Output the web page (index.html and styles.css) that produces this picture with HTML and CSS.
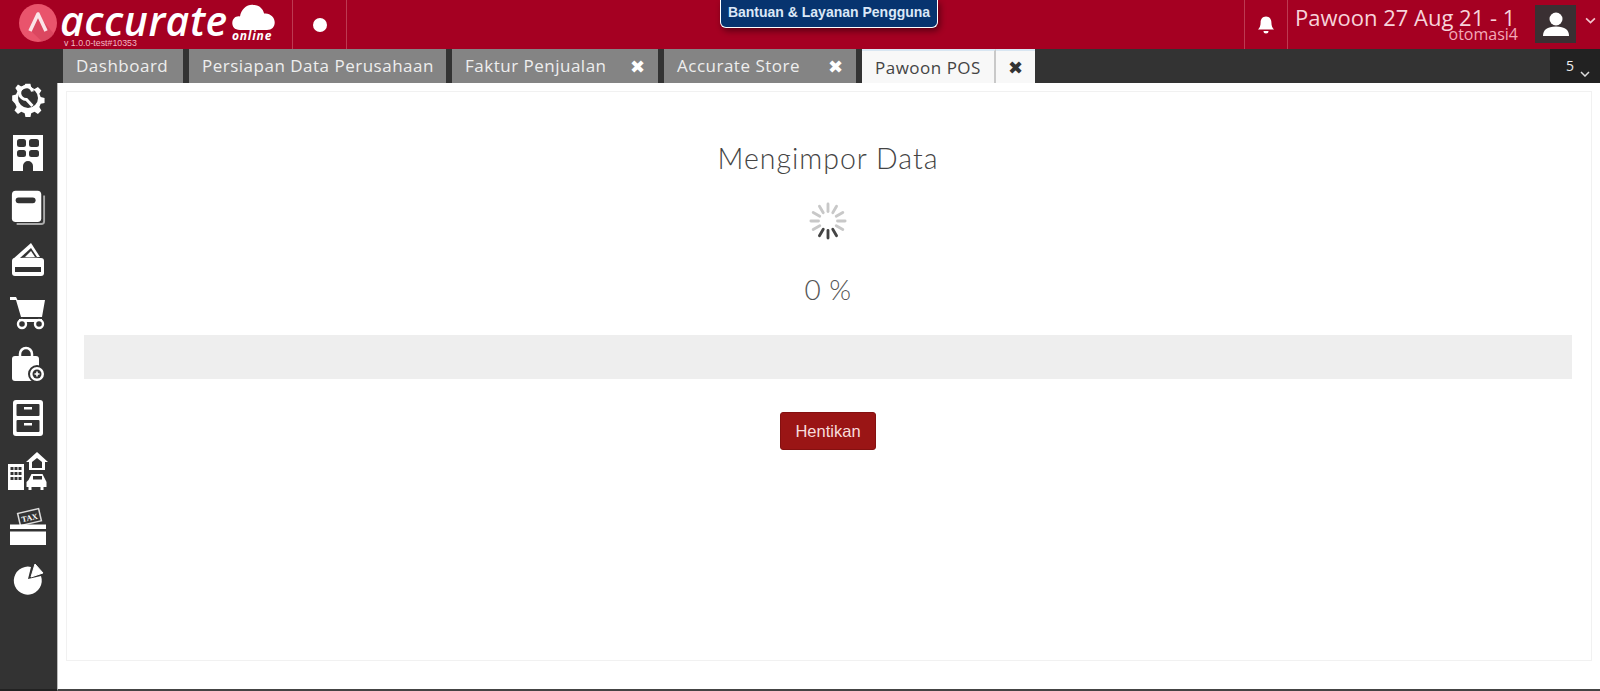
FILE: index.html
```html
<!DOCTYPE html>
<html lang="id">
<head>
<meta charset="utf-8">
<title>Accurate Online</title>
<link rel="stylesheet" href="styles.css">
</head>
<body>
<header class="topbar">
  <div class="brand">
    <svg class="brand-mark" viewBox="0 0 40 40"><circle cx="20" cy="20" r="19" fill="#e9546c"/><path d="M20 12 L36 31 A19 19 0 0 1 24 38.600 L13 28 Z" fill="#cf3d58" opacity=".55"/><path d="M12 28 L20 11 L28 28" fill="none" stroke="#fbe4e8" stroke-width="3.600" stroke-linejoin="round"/></svg>
    <span class="brand-name">accurate</span>
    <svg class="brand-cloud" viewBox="0 0 44 28"><path d="M8 28 C2 28 0 24 0 21 C0 16 4 13 8 14 C9 6 16 1 22 2 C28 2 32 6 33 11 C39 10 44 15 44 20 C44 25 41 28 36 28 Z" fill="#fff"/></svg>
    <span class="brand-online">online</span>
    <span class="brand-version">v 1.0.0-test#10353</span>
  </div>
  <div class="dot-cell"><span class="dot"></span></div>
  <div class="help-pill">Bantuan &amp; Layanan Pengguna</div>
  <div class="bell-cell">
    <svg class="bell" viewBox="0 0 20 20"><path d="M10 1.500c-3.600 0-5.400 2.800-5.400 6 0 3.500-1 5.200-2.600 7h16c-1.600-1.800-2.600-3.500-2.600-7 0-3.200-1.800-6-5.400-6z M7.500 16h5a2.500 2.500 0 0 1-5 0z" fill="#fff"/></svg>
  </div>
  <div class="company">
    <div class="company-name">Pawoon 27 Aug 21 - 1</div>
    <div class="company-user">otomasi4</div>
  </div>
  <div class="avatar">
    <svg viewBox="0 0 28 24"><circle cx="14" cy="7" r="6.500" fill="#fff"/><path d="M1 24c0-6 4-9.500 13-9.500S27 18 27 24z" fill="#fff"/></svg>
  </div>
  <svg class="caret" viewBox="0 0 10 6"><path d="M1 1l4 4 4-4" fill="none" stroke="#f3c6cf" stroke-width="1.500"/></svg>
</header>

<div class="workspace">
  <nav class="sidebar">
    <svg class="side-icon" viewBox="0 2 36 36"><path d="M15 1h6l1 4.500 4 1.700 4-2.500 4.200 4.300-2.500 4 1.700 4 4.600 1v6l-4.600 1-1.700 4 2.500 4-4.200 4.200-4-2.500-4 1.700-1 4.600h-6l-1-4.600-4-1.700-4 2.500-4.200-4.200 2.500-4-1.700-4L-1 21v-6l4.600-1 1.700-4-2.500-4L6 1.700l4 2.500 4-1.700z" transform="translate(3 3) scale(.83)" fill="#fff"/><circle cx="18" cy="18" r="10" fill="#333"/><path d="M22.500 11.500 A6.500 6.500 0 1 0 16.500 19.500 L22.500 26" fill="none" stroke="#fff" stroke-width="3"/></svg>
    <svg class="side-icon" viewBox="0 0 36 36"><path d="M3 0h30v36H23V31a5 5 0 0 0-10 0v5H3z" fill="#fff"/><rect x="7" y="4" width="9" height="8" rx="2.500" fill="#333"/><rect x="19" y="4" width="10" height="8" rx="2.500" fill="#333"/><rect x="7" y="15" width="9" height="7" rx="2.500" fill="#333"/><rect x="19" y="15" width="10" height="7" rx="2.500" fill="#333"/></svg>
    <svg class="side-icon" viewBox="0 -2 36 38"><path d="M6 36h26a3 3 0 0 0 3-3V6" fill="none" stroke="#aaa" stroke-width="2"/><rect x="1" y="1" width="31" height="33" rx="4" fill="#fff"/><rect x="5" y="8" width="21" height="6" rx="3" fill="#333"/></svg>
    <svg class="side-icon" viewBox="0 0 36 36"><path d="M3 18L21 2l9 14z" fill="#fff"/><path d="M10 17l11-10 6 9z" fill="#333"/><path d="M15 16l6-6 4 6z" fill="#fff"/><rect x="2" y="17" width="32" height="18" rx="3" fill="#fff"/><rect x="5" y="26" width="26" height="5" fill="#333"/></svg>
    <svg class="side-icon" viewBox="0 0 36 36"><path d="M0 3h6l1.500 3H35l-3 17H11L6 6H0z" fill="#fff"/><rect x="9" y="25" width="23" height="3" fill="#fff"/><circle cx="12" cy="30" r="4" fill="#333" stroke="#fff" stroke-width="2.400"/><circle cx="29" cy="30" r="4" fill="#333" stroke="#fff" stroke-width="2.400"/></svg>
    <svg class="side-icon" viewBox="0 0 36 36"><path d="M10 9V7a6 6 0 0 1 12 0v2" fill="none" stroke="#fff" stroke-width="2.500"/><rect x="2" y="9" width="27" height="25" rx="3" fill="#fff"/><circle cx="27" cy="27" r="8" fill="#fff" stroke="#333" stroke-width="2"/><circle cx="27" cy="27" r="4.500" fill="#333"/><path d="M27 24.500v5M24.500 27h5" stroke="#fff" stroke-width="1.600"/></svg>
    <svg class="side-icon" viewBox="0 0 36 36"><rect x="3" y="0" width="30" height="36" rx="3" fill="#fff"/><rect x="6.500" y="4" width="23" height="12" rx="1" fill="#333"/><rect x="6.500" y="20" width="23" height="12" rx="1" fill="#333"/><rect x="14" y="7" width="8" height="2.500" fill="#fff"/><rect x="14" y="23" width="8" height="2.500" fill="#fff"/></svg>
    <svg class="side-icon side-icon-tall" viewBox="0 0 40 40"><rect x="0" y="13" width="16" height="26" fill="#fff"/><g fill="#333"><rect x="2.500" y="16" width="3" height="3"/><rect x="6.500" y="16" width="3" height="3"/><rect x="10.500" y="16" width="3" height="3"/><rect x="2.500" y="21" width="3" height="3"/><rect x="6.500" y="21" width="3" height="3"/><rect x="10.500" y="21" width="3" height="3"/><rect x="2.500" y="26" width="3" height="3"/><rect x="6.500" y="26" width="3" height="3"/><rect x="10.500" y="26" width="3" height="3"/></g><path d="M18 11L29 1l11 10h-3v8H21v-8z" fill="#fff"/><path d="M24 17v-6l5-4 5 4v6z" fill="#333"/><path d="M21 30l3-6h11l3 6 1 2v5h-3v3h-3v-3H24v3h-3v-3h-2v-5z" fill="#fff" transform="translate(-.5 -1)"/><rect x="25" y="25" width="9" height="3.500" fill="#333"/></svg>
    <svg class="side-icon" viewBox="0 -3 36 36"><g transform="rotate(-13 20 8)"><rect x="8" y="1" width="23" height="14" fill="#ddd"/><rect x="9.500" y="2.500" width="20" height="11" fill="#333"/><text class="tax-text" x="19.500" y="11.500">TAX</text></g><rect x="0" y="15.500" width="36" height="4.500" fill="#fff"/><rect x="0" y="22.500" width="36" height="13.500" fill="#fff"/></svg>
    <svg class="side-icon" viewBox="0 0 36 36"><path d="M21 8 L18 20 L31 17 A14 14 0 1 1 21 8z" fill="#fff"/><path d="M25 5 L33 14 L21 18z" fill="#fff" stroke="#fff" stroke-width="1" stroke-linejoin="round"/></svg>
  </nav>

  <div class="content-col">
    <div class="tabstrip">
      <div class="tab tab-dashboard">Dashboard</div>
      <div class="tab tab-persiapan">Persiapan Data Perusahaan</div>
      <div class="tab tab-faktur">Faktur Penjualan<span class="tab-close">✖</span></div>
      <div class="tab tab-store">Accurate Store<span class="tab-close">✖</span></div>
      <div class="tab tab-active">Pawoon POS</div>
      <div class="tab-active-close">✖</div>
      <div class="tab-count">5<svg class="tab-caret" viewBox="0 0 10 6"><path d="M1 1l4 4 4-4" fill="none" stroke="#ddd" stroke-width="1.500"/></svg></div>
    </div>
    <main class="main">
      <section class="panel">
        <h1 class="title">Mengimpor Data</h1>
        <svg class="spinner" viewBox="0 0 40 40">
          <g class="spin-light"><path d="M20 2v8"/><path d="M20 2v8" transform="rotate(30 20 20)"/><path d="M20 2v8" transform="rotate(60 20 20)"/><path d="M20 2v8" transform="rotate(90 20 20)"/><path d="M20 2v8" transform="rotate(120 20 20)"/><path d="M20 2v8" transform="rotate(240 20 20)"/><path d="M20 2v8" transform="rotate(270 20 20)"/><path d="M20 2v8" transform="rotate(300 20 20)"/><path d="M20 2v8" transform="rotate(330 20 20)"/></g>
          <g class="spin-dark"><path d="M20 2v8" transform="rotate(150 20 20)"/><path d="M20 2v8" transform="rotate(180 20 20)"/><path d="M20 2v8" transform="rotate(210 20 20)"/></g>
        </svg>
        <div class="percent">0 %</div>
        <div class="progress"></div>
        <button class="stop" type="button">Hentikan</button>
      </section>
    </main>
  </div>
</div>
</body>
</html>
```
FILE: styles.css
```css
* { box-sizing: border-box; }
html, body { margin: 0; height: 691px; overflow: hidden; }
body { background: #fff; font-family: "Open Sans", "Liberation Sans", sans-serif; display: flex; flex-direction: column; }

.topbar { height: 49px; flex: none; background: #a50022; display: flex; align-items: stretch; position: relative; color: #fff; }
.brand { width: 292px; flex: none; display: flex; align-items: flex-start; position: relative; padding: 3px 0 0 18px; }
.brand-mark { width: 40px; height: 40px; flex: none; }
.brand-name { font-family: "Open Sans", sans-serif; font-style: italic; font-weight: 600; font-size: 41px; line-height: 40px; margin: -3px 0 0 2px; letter-spacing: .5px; color: #fff; }
.brand-cloud { width: 43px; height: 27px; flex: none; margin: 0 0 0 4px; }
.brand-online { position: absolute; left: 232px; top: 29px; font: italic 700 12px/14px "Open Sans", sans-serif; letter-spacing: .8px; }
.brand-version { position: absolute; left: 64px; top: 38px; font: 8.800px/10px "Liberation Sans", sans-serif; color: #f2b8c4; }

.dot-cell { width: 55px; flex: none; display: flex; align-items: center; justify-content: center; border-left: 1px solid #bd3a52; border-right: 1px solid #bd3a52; }
.dot { width: 14px; height: 14px; border-radius: 50%; background: #fff; }

.help-pill { position: absolute; left: 720px; top: 0; width: 218px; height: 28px; background: #07346f; border: 1.500px solid #fff; border-top: 0; border-radius: 0 0 6px 6px; font: 700 14px/24px "Liberation Sans", sans-serif; text-align: center; color: #dbe8f7; box-shadow: 2px 3px 6px rgba(0,0,0,.45); white-space: nowrap; }

.bell-cell { margin-left: auto; width: 44px; flex: none; display: flex; align-items: center; justify-content: center; border-left: 1px solid #bd3a52; border-right: 1px solid #bd3a52; }
.bell { width: 20px; height: 20px; }
.company { width: 247px; flex: none; padding: 2px 0 0 7px; position: relative; color: #f7d3da; }
.company-name { font-size: 22px; line-height: 30px; white-space: nowrap; }
.company-user { position: absolute; right: 17px; top: 23px; font-size: 16px; line-height: 22px; color: #f3a9b8; }
.avatar { width: 41px; height: 38px; flex: none; margin-top: 5px; background: #3a3033; display: flex; align-items: center; justify-content: center; }
.avatar svg { width: 28px; height: 24px; }
.caret { width: 11px; height: 7px; flex: none; margin: 17px 4px 0 9px; }

.workspace { flex: 1; display: flex; min-height: 0; }
.sidebar { width: 57px; flex: none; background: #333; display: flex; flex-direction: column; align-items: center; padding: 33px 2px 0 0; gap: 17px; border-bottom: 2px solid #222; }
.side-icon { width: 36px; height: 36px; flex: none; overflow: visible; }
.side-icon-tall { width: 40px; height: 40px; margin: -2px 0; }
.tax-text { font: 700 8px "Liberation Serif", serif; fill: #fff; text-anchor: middle; }

.content-col { flex: 1; min-width: 0; display: flex; flex-direction: column; }
.tabstrip { height: 34px; flex: none; background: #333; display: flex; padding-left: 6px; font-size: 17px; letter-spacing: .5px; }
.tab { height: 34px; background: #848484; color: #eee; line-height: 34px; padding-left: 13px; white-space: nowrap; margin-right: 6px; position: relative; }
.tab-dashboard { width: 120px; }
.tab-persiapan { width: 257px; }
.tab-faktur { width: 206px; }
.tab-store { width: 192px; }
.tab-close { position: absolute; right: 13px; top: 0; font-size: 18px; color: #fff; letter-spacing: 0; }
.tab-active { width: 134px; background: #f8f8f8; color: #444; border-top: 2px solid #d8e6f2; line-height: 34px; margin-right: 0; border-right: 2px solid #c9c9c9; }
.tab-active-close { width: 39px; height: 34px; background: #f8f8f8; border-top: 2px solid #d8e6f2; color: #333; font-size: 18px; line-height: 32px; text-align: center; letter-spacing: 0; }
.tab-count { margin-left: auto; width: 50px; background: #222; color: #eee; font-size: 14px; line-height: 34px; padding-left: 16px; display: flex; align-items: flex-start; }
.tab-caret { width: 10px; height: 6px; margin: 22px 0 0 5px; }

.main { flex: 1; min-height: 0; background: #fff; padding: 8px 8px 28px 8px; border-left: 1px solid #bbb; border-bottom: 2px solid #444; }
.panel { height: 100%; border: 1px solid #f1f1f1; display: flex; flex-direction: column; align-items: center; padding: 44px 19px 0 17px; }
.title { margin: 0; font: 300 28.500px/44px Lato, sans-serif; color: #444; letter-spacing: 1px; }
.spinner { width: 38px; height: 38px; margin-top: 22px; flex: none; }
.spin-light { stroke: #c8c8c8; stroke-width: 3; stroke-linecap: round; fill: none; }
.spin-dark { stroke: #444; stroke-width: 3; stroke-linecap: round; fill: none; }
.percent { font: 300 28px/40px Lato, sans-serif; color: #555; margin-top: 29px; letter-spacing: .5px; }
.progress { align-self: stretch; height: 44px; background: #eee; margin-top: 26px; flex: none; }
.stop { width: 96px; height: 38px; margin-top: 33px; background: #9a1515; border: 1px solid #841010; border-radius: 3px; color: #f7dcdc; font: 16.500px/20px "Liberation Sans", sans-serif; padding: 0; }
```
